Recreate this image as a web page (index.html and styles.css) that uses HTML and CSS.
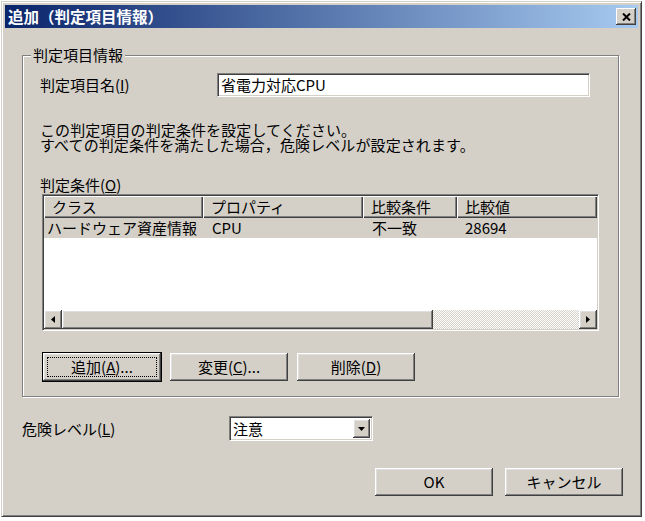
FILE: index.html
```html
<!DOCTYPE html>
<html lang="ja">
<head>
<meta charset="utf-8">
<title>追加（判定項目情報）</title>
<link rel="stylesheet" href="styles.css">
</head>
<body>
<div class="window">
  <div class="titlebar">
    <span class="title">追加（判定項目情報）</span>
    <span class="close-btn"><svg width="9" height="8" viewBox="0 0 9 8"><path d="M1 0.5l7 7M8 0.5l-7 7" stroke="#000" stroke-width="2" fill="none"/></svg></span>
  </div>
  <div class="content">
    <div class="group">
      <span class="legend">判定項目情報</span>
      <div class="name-row">
        <span class="name-label">判定項目名(<u>I</u>)</span>
        <div class="textbox">省電力対応CPU</div>
      </div>
      <p class="desc">この判定項目の判定条件を設定してください。<br>すべての判定条件を満たした場合，危険レベルが設定されます。</p>
      <div class="list-label">判定条件(<u>O</u>)</div>
      <div class="listview">
        <div class="lv-head">
          <div class="lv-hcell c1">クラス</div>
          <div class="lv-hcell c2">プロパティ</div>
          <div class="lv-hcell c3">比較条件</div>
          <div class="lv-hcell c4">比較値</div>
        </div>
        <div class="lv-row">
          <div class="lv-cell c1 first">ハードウェア資産情報</div>
          <div class="lv-cell c2">CPU</div>
          <div class="lv-cell c3">不一致</div>
          <div class="lv-cell c4">28694</div>
        </div>
        <div class="lv-fill"></div>
        <div class="hscroll">
          <div class="sb-btn"><svg width="4" height="7" viewBox="0 0 4 7"><path d="M4 0v7L0 3.5z" fill="#000"/></svg></div>
          <div class="sb-thumb"></div>
          <div class="sb-track"></div>
          <div class="sb-btn"><svg width="4" height="7" viewBox="0 0 4 7"><path d="M0 0v7l4-3.5z" fill="#000"/></svg></div>
        </div>
      </div>
      <div class="btn-row">
        <button class="btn default">追加(<u>A</u>)...</button>
        <button class="btn">変更(<u>C</u>)...</button>
        <button class="btn">削除(<u>D</u>)</button>
      </div>
    </div>
    <div class="level-row">
      <span class="level-label">危険レベル(<u>L</u>)</span>
      <div class="combo">
        <span class="combo-text">注意</span>
        <span class="combo-btn"><svg width="7" height="4" viewBox="0 0 7 4"><path d="M0 0h7L3.5 4z" fill="#000"/></svg></span>
      </div>
    </div>
    <div class="footer">
      <button class="btn">OK</button>
      <button class="btn">キャンセル</button>
    </div>
  </div>
</div>
</body>
</html>
```
FILE: styles.css
```css
* { box-sizing: border-box; }
html, body {
  margin: 0;
  padding: 0;
  background: #fff;
}
body {
  font-family: "Noto Sans CJK JP", "Liberation Sans", sans-serif;
  font-size: 15px;
  color: #000;
}
u { text-decoration: underline; text-underline-offset: 1px; }

.window {
  margin: 1px 0 0 1px;
  width: 641px;
  height: 516px;
  background: #d4d0c8;
  border: 1px solid;
  border-color: #d4d0c8 #404040 #404040 #d4d0c8;
  box-shadow: inset 1px 1px #fff, inset -1px -1px #808080;
  padding: 3px;
}

.titlebar {
  height: 23px;
  background: linear-gradient(to right, #0a246a, #a6caf0);
  display: flex;
  align-items: center;
  justify-content: space-between;
  padding: 0 2px 0 3px;
}
.title {
  color: #fff;
  font-weight: bold;
  font-size: 15.5px;
  line-height: 17px;
}
.close-btn {
  width: 20px;
  height: 17px;
  background: #d4d0c8;
  box-shadow: inset -1px -1px #404040, inset 1px 1px #fff, inset -2px -2px #808080;
  display: flex;
  align-items: center;
  justify-content: center;
}

.content {
  padding: 27px 0 0 17px;
}

.group {
  position: relative;
  width: 597px;
  border: 1px solid #808080;
  box-shadow: inset 1px 1px #fff, 1px 1px #fff;
  padding: 17px 0 15px 17px;
}
.legend {
  position: absolute;
  top: -9px;
  left: 8px;
  padding: 0 2px;
  line-height: 16px;
  background: #d4d0c8;
}

.name-row {
  display: flex;
  align-items: center;
  height: 24px;
}
.name-label {
  width: 177px;
  line-height: 16px;
}
.textbox {
  width: 373px;
  height: 24px;
  background: #fff;
  border: 1px solid;
  border-color: #808080 #fff #fff #808080;
  box-shadow: inset 1px 1px #404040, inset -1px -1px #d4d0c8;
  padding-left: 3px;
  display: flex;
  align-items: center;
  line-height: 16px;
}

.desc {
  margin: 25px 0 0;
  line-height: 15px;
  letter-spacing: 0.1px;
}
.list-label {
  margin-top: 25px;
  line-height: 16px;
}

.listview {
  margin: 1px 0 0 2px;
  width: 557px;
  height: 137px;
  background: #fff;
  border: 1px solid;
  border-color: #808080 #fff #fff #808080;
  box-shadow: inset 1px 1px #404040, inset -1px -1px #d4d0c8;
  padding: 1px;
  display: flex;
  flex-direction: column;
  overflow: hidden;
}
.lv-head {
  display: flex;
  height: 22px;
  flex: none;
}
.lv-hcell {
  background: #d4d0c8;
  box-shadow: inset 1px 1px #fff, inset -1px -1px #404040, inset -2px -2px #808080;
  padding-left: 8px;
  display: flex;
  align-items: center;
  line-height: 16px;
  white-space: nowrap;
}
.c1 { width: 159px; flex: none; }
.c2 { width: 160px; flex: none; }
.c3 { width: 94px; flex: none; }
.c4 { flex: 1; }
.lv-row {
  display: flex;
  height: 20px;
  flex: none;
  background: #d4d0c8;
}
.lv-cell {
  padding-left: 9px;
  display: flex;
  align-items: center;
  line-height: 16px;
  white-space: nowrap;
}
.lv-cell.first { padding-left: 3px; }
.lv-cell.c4 { padding-left: 8px; }
.lv-fill { flex: 1; }

.hscroll {
  display: flex;
  height: 19px;
  flex: none;
}
.sb-btn {
  width: 18px;
  flex: none;
  background: #d4d0c8;
  box-shadow: inset -1px -1px #404040, inset 1px 1px #fff, inset -2px -2px #808080, inset 2px 2px #dfdfdf;
  display: flex;
  align-items: center;
  justify-content: center;
}
.sb-thumb {
  width: 371px;
  flex: none;
  background: #d4d0c8;
  box-shadow: inset -1px -1px #404040, inset 1px 1px #fff, inset -2px -2px #808080, inset 2px 2px #dfdfdf;
}
.sb-track {
  flex: 1;
  background: repeating-conic-gradient(#fff 0 25%, #d4d0c8 0 50%) 0 0 / 2px 2px;
}

.btn-row {
  display: flex;
  gap: 9px;
  margin: 22px 0 0 3px;
}
.btn {
  position: relative;
  width: 118px;
  height: 28px;
  border: none;
  padding: 0;
  background: #d4d0c8;
  font: inherit;
  line-height: 16px;
  color: #000;
  box-shadow: inset -1px -1px #404040, inset 1px 1px #fff, inset -2px -2px #808080, inset 2px 2px #dfdfdf;
}
.btn.default {
  box-shadow: 0 0 0 1px #000, inset -1px -1px #404040, inset 1px 1px #fff, inset -2px -2px #808080, inset 2px 2px #dfdfdf;
}
.btn.default::after {
  content: "";
  position: absolute;
  inset: 4px;
  border: 1px dotted #000;
}

.level-row {
  display: flex;
  align-items: center;
  margin-top: 19px;
}
.level-label {
  width: 207px;
  line-height: 16px;
}
.combo {
  width: 144px;
  height: 25px;
  background: #fff;
  border: 1px solid;
  border-color: #808080 #fff #fff #808080;
  box-shadow: inset 1px 1px #404040, inset -1px -1px #d4d0c8;
  padding: 2px;
  display: flex;
  align-items: stretch;
}
.combo-text {
  flex: 1;
  padding-left: 1px;
  display: flex;
  align-items: center;
  line-height: 16px;
}
.combo-btn {
  width: 17px;
  background: #d4d0c8;
  box-shadow: inset -1px -1px #404040, inset 1px 1px #fff, inset -2px -2px #808080, inset 2px 2px #dfdfdf;
  display: flex;
  align-items: center;
  justify-content: center;
}

.footer {
  display: flex;
  justify-content: flex-end;
  gap: 12px;
  margin-top: 27px;
  padding-right: 15px;
}
```
